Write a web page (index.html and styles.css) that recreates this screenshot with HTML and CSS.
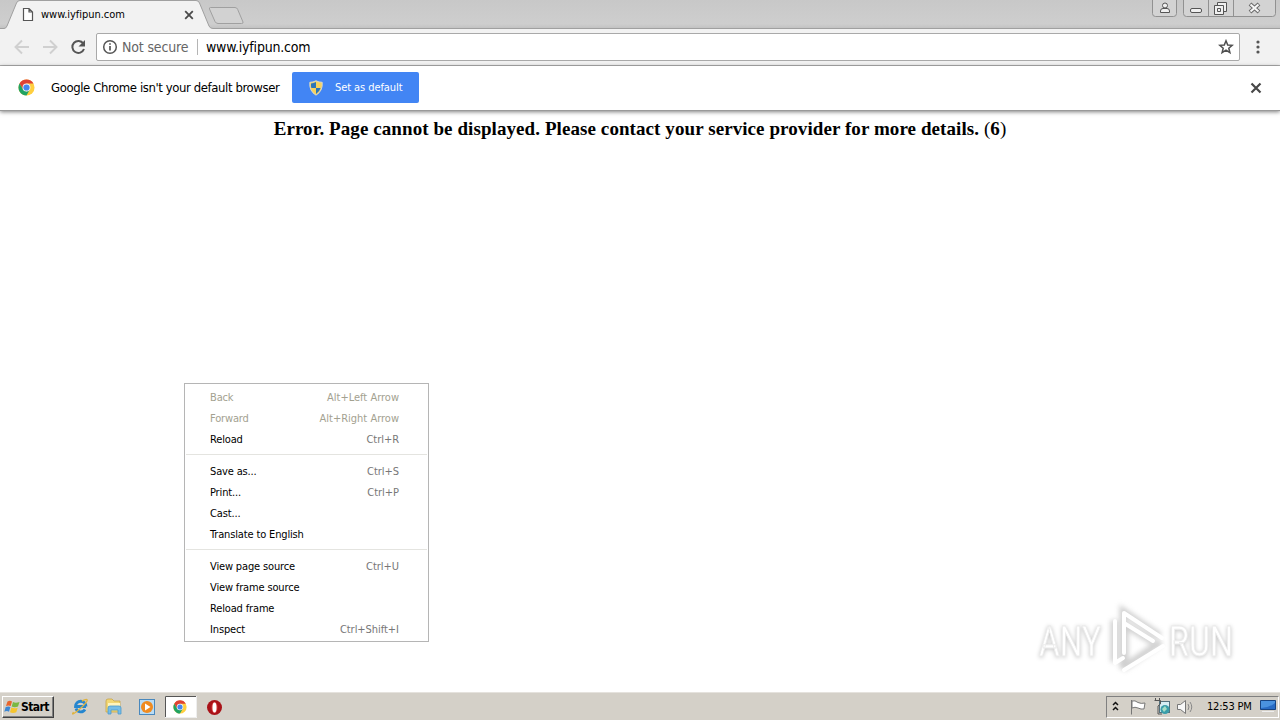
FILE: index.html
```
<!DOCTYPE html>
<html lang="en">
<head>
<meta charset="utf-8">
<title>www.iyfipun.com</title>
<link rel="stylesheet" href="styles.css">
</head>
<body>
<div class="screen">
  <header class="tabstrip">
    <svg class="tab-shapes" width="250" height="29" viewBox="0 0 250 29">
      <path d="M0 28.5H4Q6 28.5 7 26L16.500 3Q17.500 .5 20 .5H196Q198.500 .5 199.500 3L209 26Q210 28.500 213 28.500H250V29H0z" fill="#f2f2f2"/>
      <path d="M0 28.500H4Q6 28.500 7 26L16.500 3Q17.500 .5 20 .5H196Q198.500 .5 199.500 3L209 26Q210 28.500 213 28.500H250" fill="none" stroke="#a0a0a0"/>
      <path d="M210.500 7.500H235Q237 7.500 237.700 9.500L243 22Q243.500 23.500 241.500 23.500H218Q216 23.500 215 21.500L209.500 9Q209 7.500 210.500 7.500z" fill="#d2d2d2" stroke="#a0a0a0"/>
    </svg>
    <div class="tab">
      <svg width="12" height="15" viewBox="0 0 12 15" fill="#fff" stroke="#555" stroke-width="1.200"><path d="M1.500 1.500H7L10.500 5V13.500H1.500zM7 1.500V5H10.500"/></svg>
      <span class="tab-title">www.iyfipun.com</span>
      <svg width="10" height="10" viewBox="0 0 10 10" stroke="#4a4a4a" stroke-width="1.800"><path d="M1.200 1.200L8.800 8.800M8.800 1.200L1.200 8.800"/></svg>
    </div>
    <svg class="window-buttons" width="128" height="17" viewBox="0 0 128 17" fill="none" stroke="#919191">
      <path d="M.5 0V13.500Q.5 16.500 3.500 16.500H21.500Q24.500 16.500 24.500 13.500V0M31.500 0V13.500Q31.500 16.500 34.500 16.500H120.500Q123.500 16.500 123.500 13.500V0M56.500 0V16M81.500 0V16" fill="#d3d3d3"/>
      <g stroke="#555" fill="#f0f0f0"><circle cx="13" cy="5.500" r="2.500"/><path d="M8.500 12.500V11Q8.500 8.500 11 8.500H15Q17.500 8.500 17.500 11V12.500z"/><rect x="38.500" y="8.500" width="11" height="4" rx="1.500"/><path d="M65.500 2.500H74.500V11.500H65.500z"/><path d="M62.500 5.500H71.500V14.500H62.500zM65.500 8.500H68.500V11.500H65.500z"/></g>
      <path d="M98 4L107 12M107 4L98 12" stroke="#666" stroke-width="4"/><path d="M98.500 4.500L106.500 11.500M106.500 4.500L98.500 11.500" stroke="#f5f5f5" stroke-width="2.200"/>
    </svg>
  </header>

  <nav class="toolbar">
    <svg class="nav-icons" width="96" height="36" viewBox="0 0 96 36" fill="none" stroke-width="1.900">
      <path d="M29 18H16M22 11.500L15.500 18L22 24.500M43 18H56M50 11.500L56.500 18L50 24.500" stroke="#d0d0d0"/>
      <path d="M83.300 14.500A6 6 0 1 0 84 20" stroke="#555" stroke-width="2"/><path d="M85 11V17.500H78.500z" fill="#555"/>
    </svg>
    <div class="omnibox">
      <svg width="16" height="16" viewBox="0 0 16 16"><circle cx="8" cy="8" r="6.300" fill="none" stroke="#555" stroke-width="1.500"/><path d="M8 7V11.500M8 4.200V5.800" stroke="#555" stroke-width="1.700"/></svg>
      <span class="secure">Not secure</span>
      <span class="divider"></span>
      <span class="url">www.iyfipun.com</span>
      <svg class="star" width="16" height="16" viewBox="0 0 16 16"><path d="M8 1.800L9.700 6L14.200 6.300L10.800 9.200L11.900 13.700L8 11.200L4.100 13.700L5.200 9.200L1.800 6.300L6.300 6z" fill="none" stroke="#4f4f4f" stroke-width="1.500"/></svg>
    </div>
    <svg class="dots" width="4" height="14" viewBox="0 0 4 14" fill="#555"><circle cx="2" cy="2" r="1.600"/><circle cx="2" cy="7" r="1.600"/><circle cx="2" cy="12" r="1.600"/></svg>
  </nav>

  <section class="infobar">
    <svg class="chrome-logo" width="17" height="17" viewBox="0 0 18 18">
      <circle cx="9" cy="9" r="8.500" fill="#ffcf3f"/><path d="M1.600 4.800A8.500 8.500 0 0 1 16.400 4.800H9L5.400 11.100z" fill="#df4234"/><path d="M1.600 4.800L5.400 11.100L9 13.200L12.600 11.100L9 17.500A8.500 8.500 0 0 1 1.600 4.800z" fill="#20a363"/><circle cx="9" cy="9" r="4.200" fill="#f3f3f3"/><circle cx="9" cy="9" r="3.300" fill="#4487ee"/>
    </svg>
    <span class="infobar-text">Google Chrome isn't your default browser</span>
    <button class="set-default" type="button">
      <svg width="14" height="16" viewBox="0 0 14 16"><path d="M7 .8Q10 2.300 13.200 2.300Q14 11 7 15.200Q0 11 .8 2.300Q4 2.300 7 .8z" fill="#f7d25c" stroke="#d8d8c8"/><path d="M7 2Q4.500 3.300 2 3.400Q1.700 5.800 2.400 8H7zM7 8H11.600Q10.500 11.800 7 14z" fill="#2b75b8"/></svg>
      <span>Set as default</span>
    </button>
    <svg class="info-close" width="12" height="12" viewBox="0 0 12 12" stroke="#484848" stroke-width="2.200"><path d="M1.500 1.500L10.500 10.500M10.500 1.500L1.500 10.500"/></svg>
  </section>

  <main class="page">
    <h1 class="error"><b>Error. Page cannot be displayed. Please contact your service provider for more details. </b>(<b>6</b>)</h1>
    <svg class="watermark" width="216" height="72" viewBox="0 0 216 72">
      <g class="mark-shadow"><path d="M91 64V6L128 31M82 15V57M91 63L129 37"/><path d="M92 19L121 37M93 55V21"/></g>
      <g fill="none" stroke="#fff" stroke-width="4" stroke-linejoin="round" stroke-linecap="round"><path d="M92 48V8L130 33M92 18L121 36M83 58V16M92 65L131 41M83 58L91 53"/></g>
      <g class="mark-text"><text x="7" y="51" textLength="62" lengthAdjust="spacingAndGlyphs">ANY</text><text x="137" y="51" textLength="64" lengthAdjust="spacingAndGlyphs">RUN</text></g>
    </svg>
  </main>

  <footer class="taskbar">
    <button class="start" type="button">
      <svg width="17" height="16" viewBox="0 0 17 16"><path d="M3.500 2.500Q6 1 8 2.500L6.700 7Q4.500 5.800 2 7z" fill="#e9652c"/><path d="M9 3Q11.500 4.500 15.500 3L14 7.600Q10.500 9 7.700 7.500z" fill="#79b843"/><path d="M1.700 8Q4.500 7 6.400 8L5 12.700Q3 11.500 .3 12.700z" fill="#3c87d4"/><path d="M7.400 8.500Q10.500 10 13.700 8.700L12.300 13.200Q9 14.700 6 13.200z" fill="#f6c52e"/></svg>
      <span>Start</span>
    </button>
    <svg class="quick" width="176" height="28" viewBox="0 1 176 28">
      <g fill="none"><path d="M31 14.500H20.500A5 5 0 1 1 31 14.500M21 16.500A5 5 0 0 0 30 17.500" stroke="#2586cf" stroke-width="2.800"/><path d="M18.500 20Q16 24 21 20Q29 14 32 9Q33 6 27 9" stroke="#dfb23c" stroke-width="1.400"/></g>
      <path d="M51 9Q51 7 53 7H57L59 9H65V20H51z" fill="#f2d774" stroke="#c8a548" stroke-width=".8"/><path d="M53 11H65V14H53z" fill="#fff4bd"/><path d="M53 22V16Q53 14 55 14H64Q66 14 66 16V22H63V18H56V22z" fill="#75bde8" stroke="#4b9acb" stroke-width=".8"/>
      <rect x="84.500" y="7.500" width="15" height="15" fill="#b9dcf5" stroke="#4988bd"/><circle cx="92" cy="15" r="6" fill="#f08b20"/><path d="M90 11.500V18.500L95.500 15z" fill="#fff"/>
      <rect x="110" y="4" width="32" height="22" fill="#fff"/><path d="M110.500 25.500V4.500H141.500" fill="none" stroke="#555"/><path d="M110 25.500H141.500V4" fill="none" stroke="#eee"/>
      <svg x="118" y="8" width="14" height="14" viewBox="0 0 18 18"><circle cx="9" cy="9" r="8.500" fill="#ffcf3f"/><path d="M1.600 4.800A8.500 8.500 0 0 1 16.400 4.800H9L5.400 11.100z" fill="#df4234"/><path d="M1.600 4.800L5.400 11.100L9 13.200L12.600 11.100L9 17.500A8.500 8.500 0 0 1 1.600 4.800z" fill="#20a363"/><circle cx="9" cy="9" r="4.200" fill="#f3f3f3"/><circle cx="9" cy="9" r="3.300" fill="#4487ee"/></svg>
      <circle cx="159.500" cy="15.500" r="7.500" fill="#a91218"/><ellipse cx="159.500" cy="15.500" rx="3" ry="5.500" fill="#d93b3b"/><ellipse cx="159.500" cy="15.500" rx="2" ry="5" fill="#fff"/>
    </svg>
    <div class="tray">
      <svg width="90" height="20" viewBox="0 0 90 20" fill="none">
        <path d="M6 8L8.500 5.500L11 8M6 13L8.500 10.500L11 13" stroke="#111" stroke-width="1.500"/>
        <path d="M24.500 3V17.500M25 4Q28 3 31 5.500Q34 7 38 6L37 12Q34 12.500 31 11Q28 9.500 25 11z" fill="#fff" stroke="#777"/>
        <rect x="52.500" y="4.500" width="10" height="11" fill="#d6eef4" stroke="#54707c"/><path d="M47.500 3.500H53.500V7L51 9V17H55" stroke="#555"/><path d="M48.500 1V4M52.500 1V4" stroke="#555"/><circle cx="58" cy="12.500" r="4.500" fill="#3a9eaa"/><path d="M55 12L58 9L60 12L57 15z" fill="#a6ddc6"/>
        <path d="M70.500 7.500H73.500L78.500 3.500V16.500L73.500 12.500H70.500z" fill="#f8f8f8" stroke="#777"/><path d="M81 7Q83 10 81 13M83 5Q86.500 10 83 15" stroke="#888"/>
      </svg>
      <span class="clock">12:53 PM</span>
      <svg class="desktop-icon" width="16" height="13" viewBox="0 0 16 13"><path d="M.5 .5H15.500V9.500H.5z" fill="#286bc4" stroke="#174482"/><path d="M1 1H15V3Q9 8 1 8z" fill="#4a92df"/><path d="M2 11.500H14" stroke="#eee"/></svg>
    </div>
  </footer>

  <div class="menu">
    <div class="item off"><span>Back</span><kbd>Alt+Left Arrow</kbd></div>
    <div class="item off"><span>Forward</span><kbd>Alt+Right Arrow</kbd></div>
    <div class="item"><span>Reload</span><kbd>Ctrl+R</kbd></div>
    <div class="sep"></div>
    <div class="item"><span>Save as...</span><kbd>Ctrl+S</kbd></div>
    <div class="item"><span>Print...</span><kbd>Ctrl+P</kbd></div>
    <div class="item"><span>Cast...</span></div>
    <div class="item"><span>Translate to English</span></div>
    <div class="sep"></div>
    <div class="item"><span>View page source</span><kbd>Ctrl+U</kbd></div>
    <div class="item"><span>View frame source</span></div>
    <div class="item"><span>Reload frame</span></div>
    <div class="item"><span>Inspect</span><kbd>Ctrl+Shift+I</kbd></div>
  </div>
</div>
</body>
</html>
```
FILE: styles.css
```
* { box-sizing: border-box; }
body { margin: 0; font-family: "DejaVu Sans Condensed", "DejaVu Sans", sans-serif; font-stretch: condensed; font-size: 11px; color: #000; }
svg { display: block; flex: none; }
button { font: inherit; border: 0; padding: 0; }
span, kbd { white-space: nowrap; }
.screen { position: relative; width: 1280px; height: 720px; overflow: hidden; display: flex; flex-direction: column; background: #fff; }
.tabstrip { height: 29px; position: relative; display: flex; justify-content: space-between; background: linear-gradient(#c8c8c8, #cecece 85%, #c3c3c3); border-bottom: 1px solid #a0a0a0; }
.tab-shapes { position: absolute; left: 0; top: 0; }
.tab { position: relative; display: flex; align-items: center; width: 194px; height: 29px; padding-left: 22px; }
.tab-title { flex: 1; margin-left: 7px; letter-spacing: -.03px; }
.window-buttons { position: relative; }
.toolbar { height: 37px; display: flex; align-items: center; background: #f2f2f2; border-bottom: 1px solid #b0b0b0; }
.omnibox { width: 1144px; height: 28px; display: flex; align-items: center; padding: 0 5px; background: #fff; border: 1px solid #a9a9a9; border-radius: 2px; font-size: 14px; }
.secure { width: 67px; margin-left: 4px; color: #666; letter-spacing: -.15px; }
.divider { width: 1px; height: 16px; margin: 0 8px; background: #b5b5b5; }
.url { letter-spacing: -.2px; }
.star { margin-left: auto; }
.dots { margin-left: 16px; }
.infobar { height: 45px; display: flex; align-items: center; padding: 0 18px 1px 18px; border-bottom: 1px solid #999; box-shadow: 0 1px 4px rgba(0,0,0,.5); }
.infobar-text { width: 241px; margin-left: 16px; font-size: 13px; letter-spacing: -.4px; }
.set-default { width: 127px; height: 31px; display: flex; align-items: center; padding-left: 17px; gap: 12px; color: #fff; background: #4285f4; border-radius: 2px; letter-spacing: -.08px; }
.info-close { margin-left: auto; }
.page { flex: 1; display: flex; flex-direction: column; }
.error { margin: 8px 0 0; text-align: center; font: 400 19px/20px "Liberation Serif", serif; letter-spacing: .08px; white-space: nowrap; }
.watermark { margin: auto 32px 15px auto; overflow: visible; }
.mark-shadow { fill: none; stroke: #d0d0d0; stroke-width: 7; filter: blur(2.5px); }
.mark-text { font: 400 43px "Roboto", sans-serif; fill: #fff; stroke: #ececec; stroke-width: 1px; filter: drop-shadow(0 1px 2px #c4c4c4); }
.taskbar { height: 28px; display: flex; align-items: center; background: #d4d0c8; border-top: 1px solid #e5e2dd; padding: 0 0 0 2px; }
.start { width: 52px; height: 22px; display: flex; align-items: center; padding-left: 1px; background: #d4d0c8; border: 1px solid; border-color: #fff #404040 #404040 #fff; box-shadow: inset -1px -1px #808080; font-weight: bold; font-size: 12px; }
.start span { letter-spacing: -.6px; }
.quick { margin-left: 1px; }
.tray { width: 173px; height: 22px; display: flex; align-items: center; margin-left: auto; margin-right: 1px; border: 1px solid; border-color: #808080 #fff #fff #808080; }
.clock { width: 47px; margin-left: 10px; letter-spacing: -.2px; }
.desktop-icon { margin-left: 6px; }
.menu { position: absolute; left: 184px; top: 383px; width: 245px; height: 259px; padding: 3px 0; background: #fff; border: 1px solid #b5b5b5; }
.item { height: 21px; display: flex; align-items: center; justify-content: space-between; padding: 0 29px 0 25px; letter-spacing: -.15px; }
kbd { font: inherit; letter-spacing: -.04px; color: #777; }
.off, .off kbd { color: #a3a190; }
.off kbd { letter-spacing: 0; }
.sep { height: 11px; padding-top: 4px; }
.sep::before { content: ""; display: block; height: 1px; margin: 0 1px; background: #e4e4e0; }
```
